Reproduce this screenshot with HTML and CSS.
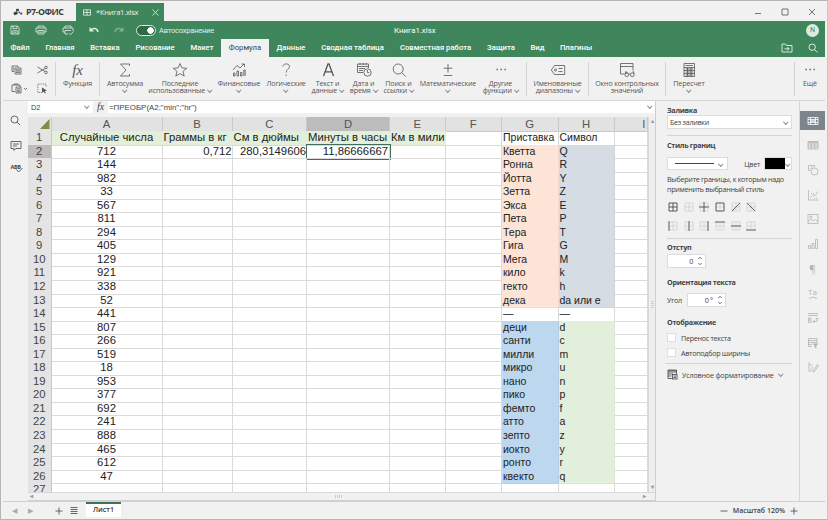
FILE: index.html
```
<!DOCTYPE html>
<html lang="ru">
<head>
    <meta charset="UTF-8">
    <meta name="viewport" content="width=device-width, initial-scale=1.0">
    <title>Книга1.xlsx</title>
    <link rel="stylesheet" href="styles.css">
</head>
<body>
<div class="window">
    <!-- Title bar -->
    <div class="titlebar">
        <div class="brand">
            <svg width="10" height="8" viewBox="0 0 10 8"><g fill="#444"><rect x="0.5" y="4" width="4" height="3" rx="1" transform="rotate(-25 2 5)"/><rect x="3" y="0.8" width="3" height="2.4" rx="1"/><circle cx="6.3" cy="4.3" r="0.9"/><circle cx="8.3" cy="5.6" r="1.1"/></g></svg>
            <span>Р7-ОФИС</span>
        </div>
        <div class="doc-tab">
            <svg width="8" height="7" viewBox="0 0 8 7"><path d="M.5 .8h7v5.4h-7zM.5 3.5h7M4 .8v5.4"/></svg>
            <span>*Книга1.xlsx</span>
            <svg class="doc-close" width="7" height="7" viewBox="0 0 7 7"><path d="M.5 .5l6 6M6.500 .5l-6 6"/></svg>
        </div>
        <div class="win-buttons">
            <svg width="8" height="8" viewBox="0 0 8 8"><path d="M1 5.500h6"/></svg>
            <svg width="8" height="8" viewBox="0 0 8 8"><path d="M1 1h6v6h-6z"/></svg>
            <svg width="8" height="8" viewBox="0 0 8 8"><path d="M1 1l6 6M7 1l-6 6"/></svg>
        </div>
    </div>

    <!-- Green header -->
    <div class="header">
        <div class="quick">
            <svg width="10" height="10" viewBox="0 0 10 10"><path d="M1 1h6.500L9 2.500V9H1zM3 1v2.500h4V1M2.800 9V5.700h4.500V9M4 7.300h2"/></svg>
            <svg width="12" height="10" viewBox="0 0 12 10"><path d="M3 3V1h6v2M3 7H1V3h10v4H9M3 5.500h6V9H3zM4 7.200h4"/></svg>
            <svg width="12" height="11" viewBox="0 0 12 11"><path d="M3 3V1h6v2M3 7H1V3h10v3M6 9H3V5.500h6M7 8.200l1.500 1.500L11.500 6.500"/></svg>
            <svg class="undo" width="10" height="8" viewBox="0 0 10 8"><path d="M1.500 4C4 2 8 1.500 9 6"/><path class="solid" d="M.5 1v4.500h4.500z"/></svg>
            <svg class="redo" width="10" height="8" viewBox="0 0 10 8"><path d="M8.500 4C6 2 2 1.500 1 6"/><path class="solid" d="M9.500 1v4.500H5z"/></svg>
            <span class="toggle"></span>
            <span class="autosave">Автосохранение</span>
        </div>
        <div class="doc-title">Книга1.xlsx</div>
        <div class="avatar">N</div>
    </div>
    <div class="menu">
        <a class="m1">Файл</a>
        <a class="m2">Главная</a>
        <a class="m3">Вставка</a>
        <a class="m4">Рисование</a>
        <a class="m5">Макет</a>
        <a class="m6 active">Формула</a>
        <a class="m7">Данные</a>
        <a class="m8">Сводная таблица</a>
        <a class="m9">Совместная работа</a>
        <a class="m10">Защита</a>
        <a class="m11">Вид</a>
        <a class="m12">Плагины</a>
        <div class="menu-right">
            <svg width="12" height="10" viewBox="0 0 12 10"><path d="M1 9V1h3.500l1 1.500H11V9zM3.500 5.800h4.500M6.300 4l1.800 1.800-1.800 1.800"/></svg>
            <svg width="10" height="10" viewBox="0 0 10 10"><circle cx="4.200" cy="4.200" r="3.200"/><path d="M6.600 6.600L9.500 9.500"/></svg>
        </div>
    </div>

    <!-- Toolbar -->
    <div class="toolbar">
        <div class="clipboard">
            <svg width="11" height="10" viewBox="0 0 11 10"><path d="M3 6.500H1V1h6v1.500M1.800 3h1.500M1.800 4.800h1.500M4 3h6v6H4zM5 4.800h4M5 6h4M5 7.400h4"/></svg>
            <svg width="11" height="10" viewBox="0 0 11 10"><path d="M.5 2l7.500 4.500M.5 8L8 3.500"/><circle cx="9" cy="2.500" r="1.300"/><circle cx="9" cy="7.500" r="1.300"/></svg>
            <svg width="17" height="11" viewBox="0 0 17 11"><path d="M4 8.500H1V2h8v2M3 2V1h4v1M5 4h5v6H5zM6 5.800h3M6 7.200h3M6 8.600h3M13 5l1.500 1.500L16 5"/></svg>
            <svg width="11" height="11" viewBox="0 0 11 11"><path stroke-dasharray="1.200 1" d="M5 9.500H.8V1H9v3"/><path class="solid" d="M5 4.500l5 3-2.200.5 1 2-1 .5-1-2L5 9.800z"/></svg>
        </div>
        <div class="tool w43">
            <span class="fx">fx</span><span>Функция</span>
        </div>
        <div class="tool w51 sep">
            <svg viewBox="0 0 16 16"><path d="M12.500 4V2H3.500L9 8l-5.500 6h9v-2"/></svg><span>Автосумма</span><i></i>
        </div>
        <div class="tool w60">
            <svg viewBox="0 0 16 16"><path d="M8 1.500l1.900 4.400 4.800.4-3.700 3.100 1.200 4.700L8 11.600l-4.200 2.500L5 9.400 1.300 6.300l4.800-.4z"/></svg><span>Последние</span><span>использованные<i></i></span>
        </div>
        <div class="tool w58">
            <svg viewBox="0 0 16 16"><path d="M2.500 14v-3h1.500v3zM6 14V9h1.500v5zM9.500 14v-3.500H11V14zM12.800 14V8h1.400v6M2 8l4-4.500 3 2.500 4-4M10.500 2h3v3"/></svg><span>Финансовые</span><i></i>
        </div>
        <div class="tool w36">
            <svg viewBox="0 0 16 16"><path d="M5 4.500C5 1 11.500 1 11.500 4.700 11.500 7 8.200 7.500 8.200 10.500M8.200 12.500v1.500"/></svg><span>Логические</span><i></i>
        </div>
        <div class="tool w47">
            <svg viewBox="0 0 16 16"><path class="thick" d="M3.500 14L8 2h1l4.500 12M5.200 9.800h6.500"/></svg><span>Текст и</span><span>данные<i></i></span>
        </div>
        <div class="tool w25">
            <svg viewBox="0 0 16 16"><path d="M7 10.500H1.500V2h11v4M1.500 4.500h11M4 1v2M7 1v2M10 1v2M3 6.500h6M3 8.500h4"/><circle cx="11.500" cy="10.500" r="3.700"/><path d="M11.500 8v2.700h2"/></svg><span>Дата и</span><span>время<i></i></span>
        </div>
        <div class="tool w45">
            <svg viewBox="0 0 16 16"><circle cx="7.200" cy="7" r="5"/><path d="M10.800 10.600l4 4"/></svg><span>Поиск и</span><span>ссылки<i></i></span>
        </div>
        <div class="tool w54">
            <svg viewBox="0 0 16 16"><path d="M8 2v8.500M3.700 6.200h8.600M3.700 13.500h8.600"/></svg><span>Математические</span><i></i>
        </div>
        <div class="tool w51">
            <svg viewBox="0 0 16 16"><path class="dots" d="M3.500 7.500h1.300M7.500 7.500h1.300M11.500 7.500h1.300"/></svg><span>Другие</span><span>функции<i></i></span>
        </div>
        <div class="tool w62 sep">
            <svg viewBox="0 0 16 16"><path d="M4.500 3.500h10.200v9H4.500L1.300 8zM8.500 6.500h4M8.500 9.500h4"/><circle cx="5.500" cy="8" r="1.100"/></svg><span>Именованные</span><span>диапазоны<i></i></span>
        </div>
        <div class="tool w77 sep">
            <svg viewBox="0 0 16 16"><path d="M5 12H1.500V1.500h12.500v7M1.500 4.500H14M6 11h3"/><circle cx="7.800" cy="12.700" r="1.900"/><circle cx="13.300" cy="12.700" r="1.900"/><path d="M9.700 12h1.700M6 12.500L7 9M15 12l-.8-3"/></svg><span>Окно контрольных</span><span>значений</span>
        </div>
        <div class="tool w47 sep">
            <svg viewBox="0 0 16 16"><path d="M3 1.500h10.500v13H3zM3 5.500h10.500M4.500 3.500h7.500M3 8.500h10.500M3 11.500h10.500M6.500 5.500v9M10 5.500v9M4.700 7h7.500M4.700 10h7.500M4.700 13h7.500"/></svg><span>Пересчет</span><i></i>
        </div>
        <div class="spacer"></div>
        <div class="tool more sep">
            <svg viewBox="0 0 16 16"><path class="dots" d="M3.500 7.500h1.300M7.500 7.500h1.300M11.500 7.500h1.300"/></svg><span>Ещё</span>
        </div>
    </div>

    <!-- Work area -->
    <div class="main">
        <div class="leftbar">
            <svg width="11" height="11" viewBox="0 0 11 11"><circle cx="4.500" cy="4.500" r="3.500"/><path d="M7 7l3.200 3.200"/></svg>
            <svg width="12" height="11" viewBox="0 0 12 11"><path d="M1 1.500h10v7H6L3.800 10.300V8.500H1zM3 4h6M3 6h4"/></svg>
            <div class="spell">АБВ<svg width="7" height="6" viewBox="0 0 7 6"><path d="M.5 2.500l2 2.500L6.500 1"/></svg></div>
        </div>

        <div class="editor">
            <div class="formula-bar">
                <div class="name-box">D2<i></i></div>
                <div class="fx">fx</div>
                <div class="formula">=ПРЕОБР(A2;"min";"hr")<i></i></div>
            </div>
            <div class="sheet-wrap">
                <div class="sheet" id="sheet"></div>
                <div class="vscroll"><b>▴</b><em></em><b>▾</b></div>
            </div>
            <div class="hscroll"><b>◂</b><em></em><b>▸</b></div>
        </div>

        <!-- Cell settings -->
        <div class="panel">
            <h3>Заливка</h3>
            <div class="select fill">Без заливки<i></i></div>
            <hr>
            <h3 class="t-border">Стиль границ</h3>
            <div class="line border-line">
                <div class="select stroke"><u></u><i></i></div>
                <span class="color-label">Цвет</span>
                <div class="color"><b></b><i></i></div>
            </div>
            <p>Выберите границы, к которым надо<br>применить выбранный стиль</p>
            <div class="borders" id="borders"></div>
            <hr>
            <h3 class="t-indent">Отступ</h3>
            <div class="spin">0<svg width="6" height="10" viewBox="0 0 6 10"><path d="M1.300 3L3 1.300 4.700 3M1.300 7L3 8.700 4.700 7"/></svg></div>
            <h3 class="t-orient">Ориентация текста</h3>
            <div class="line angle">
                <span>Угол</span>
                <div class="spin">0 °<svg width="6" height="10" viewBox="0 0 6 10"><path d="M1.300 3L3 1.300 4.700 3M1.300 7L3 8.700 4.700 7"/></svg></div>
            </div>
            <h3 class="t-view">Отображение</h3>
            <label class="check"><b></b>Перенос текста</label>
            <label class="check"><b></b>Автоподбор ширины</label>
            <hr class="wide">
            <div class="cond">
                <svg width="11" height="11" viewBox="0 0 11 11"><path d="M5 9.500H1V1h8.500v4M1 3h8.500M1 5h5M1 7h3.500M1 1.800h8.500"/><rect x="5.500" y="5.500" width="4.500" height="4.500"/><path d="M6.500 7h2.500M6.500 8.500h2.500"/></svg>
                <span>Условное форматирование</span><i></i>
            </div>
        </div>

        <div class="rightbar">
            <div class="active"><svg viewBox="0 0 12 12"><path d="M1 2.500h10v7H1zM1 4.500h10M1 7.500h10M3.500 2.500v7M8.500 2.500v7"/><path class="thick" d="M4 6h4.500"/></svg></div>
            <div><svg viewBox="0 0 12 12"><path d="M1 2.500h10v7.500H1zM1 4h10M1 6h10M1 8h10M4.300 2.500V10M7.700 2.500V10M1 3.200h10"/></svg></div>
            <div><svg viewBox="0 0 12 12"><path d="M3.500 6.500H1.500V1.500h6v2"/><circle cx="7.500" cy="7.500" r="3.500"/><path d="M3 5l3-2.500"/></svg></div>
            <div><svg viewBox="0 0 12 12"><path d="M1.500 1v10h10M3.500 8.500l2.500-3 2 1.200 3-4.200"/><path stroke-dasharray="1 1" d="M4 4.500h4M7 9h4"/></svg></div>
            <div><svg viewBox="0 0 12 12"><path d="M1 1.500h10v9H1zM1 8.500l3-2.500 2.500 2 2-1.500L11 8.500"/><circle cx="4" cy="4" r="1"/></svg></div>
            <div><svg viewBox="0 0 12 12"><path d="M1.500 10.500v-3h2v3zM5 10.500v-5h2v5zM8.500 10.500v-9h2v9z"/></svg></div>
            <div class="para">¶</div>
            <div class="text-art">Ta<svg viewBox="0 0 12 3"><path d="M2 2.500q4-3 8 0"/></svg></div>
            <div><svg viewBox="0 0 12 12"><path d="M1 1.500h10M1 3.500h10M1.500 6h2.500v4.500H1.500zM1.500 8h2.500M6 9.500h4V6M8.500 7.300L10 5.800l1.500 1.500M7.500 8L6 9.500 7.500 11"/></svg></div>
            <div><svg viewBox="0 0 12 12"><path d="M5 9.500H1.500V1.500h8.500v4M1.500 3.500H10M1.500 5.500H10M1.500 7.500H5"/><path class="solid" d="M5.500 6.500h6L9.300 9v2.500L7.700 10.500V9z"/></svg></div>
            <div><svg viewBox="0 0 12 12"><path d="M2 1v9.500M2 10.500c4 0 2-4.500 4-4.500M6 10l4.500-6.500 1 .8L7.500 10.500 5.800 11zM2 4c2-1 3 0 3 1"/></svg></div>
        </div>
    </div>

    <!-- Status bar -->
    <div class="statusbar">
        <span class="nav-arrow">◀</span>
        <span class="nav-arrow">▶</span>
        <svg class="plus" width="8" height="8" viewBox="0 0 8 8"><path d="M4 .5v7M.5 4h7"/></svg>
        <svg class="list" width="8" height="8" viewBox="0 0 8 8"><path d="M.5 .5h7M.5 2.500h7M.5 4.500h7M.5 6.500h7"/></svg>
        <div class="sheet-tab">Лист1</div>
        <div class="zoom">
            <svg width="8" height="8" viewBox="0 0 8 8"><path d="M.5 4h7"/></svg>
            <span>Масштаб 120%</span>
            <svg width="8" height="8" viewBox="0 0 8 8"><path d="M4 .5v7M.5 4h7"/></svg>
        </div>
    </div>
</div>

<script>
    const numbers = [712, 144, 982, 33, 567, 811, 294, 405, 129, 921, 338, 52, 441, 807, 266, 519, 18, 953, 377, 692, 241, 888, 465, 612, 47];
    const prefixes = [
        ["Кветта", "Q"], ["Ронна", "R"], ["Йотта", "Y"], ["Зетта", "Z"], ["Экса", "E"],
        ["Пета", "P"], ["Тера", "T"], ["Гига", "G"], ["Мега", "M"], ["кило", "k"],
        ["гекто", "h"], ["дека", "da или e"], ["—", "—"], ["деци", "d"], ["санти", "c"],
        ["милли", "m"], ["микро", "u"], ["нано", "n"], ["пико", "p"], ["фемто", "f"],
        ["атто", "a"], ["зепто", "z"], ["иокто", "y"], ["ронто", "r"], ["квекто", "q"]
    ];

    function row(cls, head, cells) {
        return `<div class="row ${cls}"><div class="rh">${head}</div>` +
            cells.map(c => `<div class="cell ${c[1] || ""}">${c[0]}</div>`).join("") + `</div>`;
    }

    let html = row("cols", "", ["A", "B", "C", "D", "E", "F", "G", "H", "I"].map(c => [c, c === "D" ? "current" : c === "I" ? "last" : ""]));
    html += row("titles", 1, [
        ["Случайные числа", "green"], ["Граммы в кг", "green left"], ["См в дюймы", "green left"],
        ["Минуты в часы", "green left"], ["Км в мили", "green left"], [""],
        ["Приставка", "small"], ["Символ", "small"], [""]
    ]);
    numbers.forEach((n, i) => {
        const big = i < 12, dash = i === 12;
        const first = i === 0;
        html += row(first ? "selected" : "", i + 2, [
            [n, "center"],
            [first ? "0,712" : "", "right"],
            [first ? "280,3149606" : "", "right"],
            [first ? "11,86666667" : "", first ? "right picked" : ""],
            [""], [""],
            [prefixes[i][0], "small " + (dash ? "" : big ? "orange" : "blue")],
            [prefixes[i][1], "small " + (dash ? "" : big ? "steel" : "green")],
            [""]
        ]);
    });
    html += row("", 27, Array(9).fill([""]));
    document.getElementById("sheet").innerHTML = html;

    // Border presets: dark path drawn over the pale cell outline
    const borders = [
        "M1 1h8v8H1zM5 1v8M1 5h8", "", "M5 0v10M0 5h10", "M1 1h8v8H1z", "M1 9L9 1", "M1 1l8 8",
        "M1 0v10", "M5 0v10", "M9 0v10", "M0 1h10", "M0 5h10", "M0 9h10"
    ];
    document.getElementById("borders").innerHTML = borders.map(d =>
        `<svg width="10" height="10" viewBox="0 0 10 10"><path class="pale" d="M1 1h8v8H1zM5 1v8M1 5h8"/><path d="${d}"/></svg>`).join("");
</script>
</body>
</html>
```

FILE: styles.css
```
* {
    margin: 0;
    padding: 0;
    box-sizing: border-box;
}

body {
    width: 828px;
    height: 520px;
    overflow: hidden;
    background: #f1f1f1;
    font-family: "Open Sans", "Noto Sans", sans-serif;
    font-size: 7px;
    color: #444;
}

svg {
    fill: none;
    stroke: currentColor;
    stroke-width: 0.8;
    flex: none;
    display: block;
}

svg .solid {
    fill: currentColor;
    stroke: none;
}

svg .thick {
    stroke-width: 1.3;
}

svg .dots {
    stroke-width: 1.4;
}

/* Small drop-down chevron */
i {
    display: inline-block;
    width: 3.5px;
    height: 3.5px;
    border-right: 1px solid #888;
    border-bottom: 1px solid #888;
    transform: rotate(45deg);
    flex: none;
}

.window {
    width: 828px;
    height: 520px;
    display: flex;
    flex-direction: column;
    padding: 0 2px 0 2px;
    border: 1px solid #b5b5b5;
    border-right-color: #c8c8c8;
}

/* Title bar */
.titlebar {
    height: 20px;
    display: flex;
    align-items: stretch;
    flex: none;
}

.brand {
    width: 73px;
    padding: 2px 0 0 10px;
    display: flex;
    align-items: center;
    gap: 3px;
    font-size: 8.8px;
    font-weight: 700;
    letter-spacing: -0.5px;
    color: #3c3c3c;
}

.brand svg {
    stroke: none;
}

.doc-tab {
    width: 88px;
    margin-top: 2px;
    padding: 0 5px 0 7px;
    display: flex;
    align-items: center;
    gap: 5px;
    background: #40865c;
    color: #e9f3ec;
    font-size: 7.5px;
    letter-spacing: -0.25px;
}

.doc-close {
    margin-left: auto;
}

.win-buttons {
    margin-left: auto;
    padding: 1px 9px 0 0;
    display: flex;
    align-items: center;
    gap: 19px;
    color: #555;
}

/* Green header */
.header {
    height: 18px;
    flex: none;
    display: flex;
    align-items: center;
    background: #40865c;
    color: #fff;
    font-family: Roboto, sans-serif;
}

.quick {
    width: 391px;
    padding-left: 7px;
    display: flex;
    align-items: center;
    gap: 15px;
    color: #e3f0e7;
}

.undo path:first-child,
.redo path:first-child {
    stroke-width: 1.5;
}

.redo {
    opacity: 0.4;
}

.toggle {
    width: 20px;
    height: 11px;
    margin-left: -3px;
    border: 1px solid #dcebe1;
    border-radius: 6px;
    background: radial-gradient(circle at 13.5px 4.5px, #fff 3px, transparent 3.5px) #2f6a47;
}

.autosave {
    margin-left: -12px;
    font-size: 7.4px;
    letter-spacing: -0.15px;
}

.doc-title {
    font-size: 7.8px;
}

.avatar {
    width: 13px;
    height: 13px;
    margin: 0 6px 0 auto;
    border-radius: 50%;
    background: #dcebe1;
    color: #40865c;
    font-size: 7px;
    line-height: 13px;
    text-align: center;
}

.menu {
    height: 18px;
    flex: none;
    display: flex;
    background: #40865c;
    color: #fff;
    font-family: Roboto, sans-serif;
    font-size: 7.7px;
    font-weight: 500;
    line-height: 18px;
    text-align: center;
    white-space: nowrap;
}

.menu a { flex: none; }
.menu .m1 { width: 34px; }
.menu .m2 { width: 46px; }
.menu .m3 { width: 44px; }
.menu .m4 { width: 56px; }
.menu .m5 { width: 38px; }
.menu .m6 { width: 48px; }
.menu .m7 { width: 44px; }
.menu .m8 { width: 79px; }
.menu .m9 { width: 87px; }
.menu .m10 { width: 44px; }
.menu .m11 { width: 29px; }
.menu .m12 { width: 48px; }

.menu .active {
    background: #f1f1f1;
    color: #444;
    font-weight: 400;
}

.menu-right {
    margin-left: auto;
    padding-right: 7px;
    display: flex;
    align-items: center;
    gap: 15px;
}

/* Toolbar */
.toolbar {
    height: 44px;
    flex: none;
    display: flex;
    border-bottom: 1px solid #d6d6d6;
    color: #555;
}

.clipboard {
    width: 53px;
    height: 34px;
    margin-top: 5px;
    padding: 3px 0 0 8px;
    display: grid;
    grid-template-columns: 26px 12px;
    grid-template-rows: 18px 14px;
    border-right: 1px solid #d4d4d4;
}

.tool {
    height: 34px;
    margin-top: 5px;
    display: flex;
    flex-direction: column;
    align-items: center;
    font-size: 7.1px;
    line-height: 7.4px;
    letter-spacing: -0.15px;
    white-space: nowrap;
}

.tool svg {
    width: 16px;
    height: 16px;
    margin: 0 0 2px;
}

.tool .fx {
    height: 18px;
    font-size: 15px;
    line-height: 17px;
}

.tool > i {
    margin-top: 1px;
}

.tool span i {
    margin: 0 0 1.5px 3px;
}

.sep {
    border-left: 1px solid #d4d4d4;
}

.fx {
    font-family: "Liberation Serif", serif;
    font-style: italic;
}

.w25 { width: 25px; }
.w36 { width: 36px; }
.w43 { width: 43px; }
.w45 { width: 45px; }
.w47 { width: 47px; }
.w51 { width: 51px; }
.w54 { width: 54px; }
.w58 { width: 58px; }
.w60 { width: 60px; }
.w62 { width: 62px; }
.w77 { width: 77px; }
.more { width: 31px; }

.spacer {
    flex: 1;
}

/* Work area */
.main {
    flex: 1;
    min-height: 0;
    display: flex;
}

.leftbar {
    width: 25px;
    padding-top: 14px;
    display: flex;
    flex-direction: column;
    align-items: center;
    gap: 14px;
}

.spell {
    position: relative;
    margin-top: -2px;
    font-size: 5.5px;
    font-weight: 700;
    line-height: 8px;
    letter-spacing: -0.3px;
}

.spell svg {
    position: absolute;
    right: -2px;
    top: 4px;
}

.editor {
    width: 628px;
    display: flex;
    flex-direction: column;
    border-right: 1px solid #cfcfcf;
}

.formula-bar {
    height: 12px;
    margin-bottom: 4px;
    flex: none;
    display: flex;
    background: #fff;
    line-height: 13px;
    font-family: "Liberation Sans", sans-serif;
    font-size: 7.4px;
}

.formula-bar i {
    margin: 3px 0 0 auto;
}

.name-box {
    width: 65px;
    padding: 0 5px 0 3px;
    display: flex;
}

.formula-bar .fx {
    width: 15px;
    background: #f1f1f1;
    font-family: "Liberation Serif", serif;
    font-size: 10px;
    line-height: 12px;
    text-align: center;
}

.formula {
    flex: 1;
    padding: 0 4px 0 1px;
    display: flex;
    font-size: 7.9px;
}

.sheet-wrap {
    flex: 1;
    min-height: 0;
    display: flex;
}

/* Spreadsheet grid */
.sheet {
    width: 620px;
    height: 375px;
    overflow: hidden;
    background: #fff;
    font-family: "Liberation Sans", Arial, sans-serif;
    font-size: 11.3px;
    color: #222;
}

.row {
    height: 13.56px;
    display: grid;
    grid-template-columns: 23.5px 111px 70px 74.5px 83px 55.5px 56.5px 56.5px 56px 33.5px;
    line-height: 13.5px;
}

.rh {
    background: #e4e4e4;
    border-right: 1px solid #c9c9c9;
    border-bottom: 1px solid #d0d0d0;
    color: #444;
    text-align: center;
}

.cell {
    border-right: 1px solid #dadada;
    border-bottom: 1px solid #dadada;
    white-space: nowrap;
}

.cols {
    height: 14px;
}

.cols .rh {
    padding: 2px 1px 0 12px;
}

.cols .rh::after {
    content: "";
    display: block;
    height: 10px;
    background: #7d8f3c;
    clip-path: polygon(100% 0, 100% 100%, 0 100%);
}

.cols .cell {
    background: #e2e2e2;
    border-color: #c9c9c9;
    color: #555;
    line-height: 14px;
    text-align: center;
}

.cols .current,
.selected .rh {
    background: #bcbcbc;
}

.cols .last {
    padding-left: 26px;
}

.titles .cell {
    text-align: center;
}

.titles .small,
.titles .left {
    padding-left: 1px;
    text-align: left;
}

.green {
    background: #e2efda;
}

.titles .green {
    border-right-color: #e2efda;
}

.center {
    text-align: center;
}

.right {
    padding-right: 0;
    text-align: right;
}

.small {
    padding-left: 1px;
    font-size: 10.5px;
}

.orange {
    background: #fce4d6;
    border-color: #f3dccf;
}

.steel {
    background: #d6dce4;
    border-color: #ced4dc;
}

.blue {
    background: #bdd7ee;
    border-color: #b5cfe6;
}

.small.green {
    border-color: #dae7d2;
}

.picked {
    outline: 1px solid #40705a;
    outline-offset: -0.5px;
    padding-right: 1px;
}

/* Scroll bars */
.vscroll {
    width: 7px;
    display: flex;
    flex-direction: column;
    justify-content: space-between;
    align-items: center;
    background: #eee;
    border-left: 1px solid #d8d8d8;
    font-size: 6px;
    line-height: 9px;
    color: #999;
}

.vscroll em {
    width: 3px;
    height: 7px;
    background: repeating-linear-gradient(#ccc 0 1px, transparent 1px 2px);
}

.hscroll {
    height: 9px;
    flex: none;
    padding: 0 9px 0 2px;
    display: flex;
    justify-content: space-between;
    align-items: center;
    border-top: 1px solid #d8d8d8;
    border-bottom: 1px solid #cfcfcf;
    font-size: 6px;
    line-height: 7px;
    color: #999;
}

.hscroll em {
    width: 7px;
    height: 3px;
    background: repeating-linear-gradient(90deg, #ccc 0 1px, transparent 1px 2px);
}

/* Cell settings */
.panel {
    width: 144px;
    padding: 4px 7px 0 11px;
    border-right: 1px solid #d6d6d6;
    font-size: 7.2px;
    line-height: 10px;
    letter-spacing: -0.3px;
    white-space: nowrap;
}

.panel h3 {
    height: 10px;
    font-size: 7.2px;
    font-weight: 700;
    color: #444;
}

.panel hr {
    border: 0;
    border-top: 1px solid #d4d4d4;
}

.select,
.spin,
.color {
    display: flex;
    align-items: center;
    background: #fff;
    border: 1px solid #dcdcdc;
}

.fill {
    height: 14px;
    margin-bottom: 6px;
    padding: 0 4px 0 2px;
    justify-content: space-between;
}

.panel .t-border {
    margin: 4px 0 7px;
}

.line {
    display: flex;
    align-items: center;
}

.stroke {
    width: 61px;
    height: 13px;
    padding: 0 5px 0 7px;
    justify-content: space-between;
}

.stroke u {
    width: 39px;
    height: 1px;
    background: #444;
}

.color-label {
    margin: 0 4px 0 auto;
}

.color {
    height: 13px;
    width: 28px;
    justify-content: space-between;
    padding-right: 2px;
}

.color b {
    width: 20px;
    height: 11px;
    background: #000;
}

.panel p {
    margin-top: 4px;
}

.borders {
    margin: 8px 0 7px 1px;
    display: grid;
    grid-template-columns: repeat(6, 15.7px);
    row-gap: 9px;
}

.borders .pale {
    stroke: #d2d2d2;
}

.panel .t-indent {
    margin: 3px 0 2px;
}

.spin {
    width: 39px;
    height: 14px;
    padding: 0 2px;
    justify-content: flex-end;
    gap: 4px;
}

.panel .t-orient {
    margin: 9px 0 6px;
}

.angle .spin {
    margin-left: 5px;
}

.panel .t-view {
    margin: 10px 0 3px;
}

.check {
    height: 15px;
    display: flex;
    align-items: center;
    gap: 5px;
}

.check b {
    width: 9px;
    height: 9px;
    background: #fff;
    border: 1px solid #dedede;
}

.panel .wide {
    margin: 3px 0 5px -2px;
}

.cond {
    display: flex;
    align-items: center;
    gap: 4px;
    letter-spacing: -0.2px;
}

.cond i {
    margin: 0 0 2px 1px;
}

/* Right icon bar */
.rightbar {
    flex: 1;
    padding-top: 10px;
    color: #b4b4b4;
}

.rightbar div {
    height: 19px;
    margin-bottom: 5.7px;
    display: flex;
    align-items: center;
    justify-content: center;
}

.rightbar svg {
    width: 12px;
    height: 12px;
}

.rightbar .active {
    background: #7d858c;
    color: #fff;
}

.rightbar .para {
    font-size: 10px;
}

.rightbar .text-art {
    flex-direction: column;
    font-size: 8px;
    line-height: 8px;
}

.rightbar .text-art svg {
    height: 3px;
}

/* Status bar */
.statusbar {
    height: 18px;
    flex: none;
    display: flex;
    align-items: center;
    border-top: 1px solid #d0d0d0;
}

.nav-arrow {
    width: 16px;
    padding-left: 9px;
    font-size: 7px;
    color: #aaa;
}

.plus {
    margin-left: 20px;
}

.list {
    margin-left: 7px;
}

.sheet-tab {
    width: 35px;
    height: 15px;
    margin-left: 8px;
    align-self: flex-start;
    border-top: 2px solid #40705a;
    background: #fff;
    color: #333;
    font-size: 7px;
    font-weight: 600;
    line-height: 12px;
    text-align: center;
}

.zoom {
    margin-left: auto;
    padding-right: 27px;
    display: flex;
    align-items: center;
    gap: 5px;
    font-weight: 600;
}
```
